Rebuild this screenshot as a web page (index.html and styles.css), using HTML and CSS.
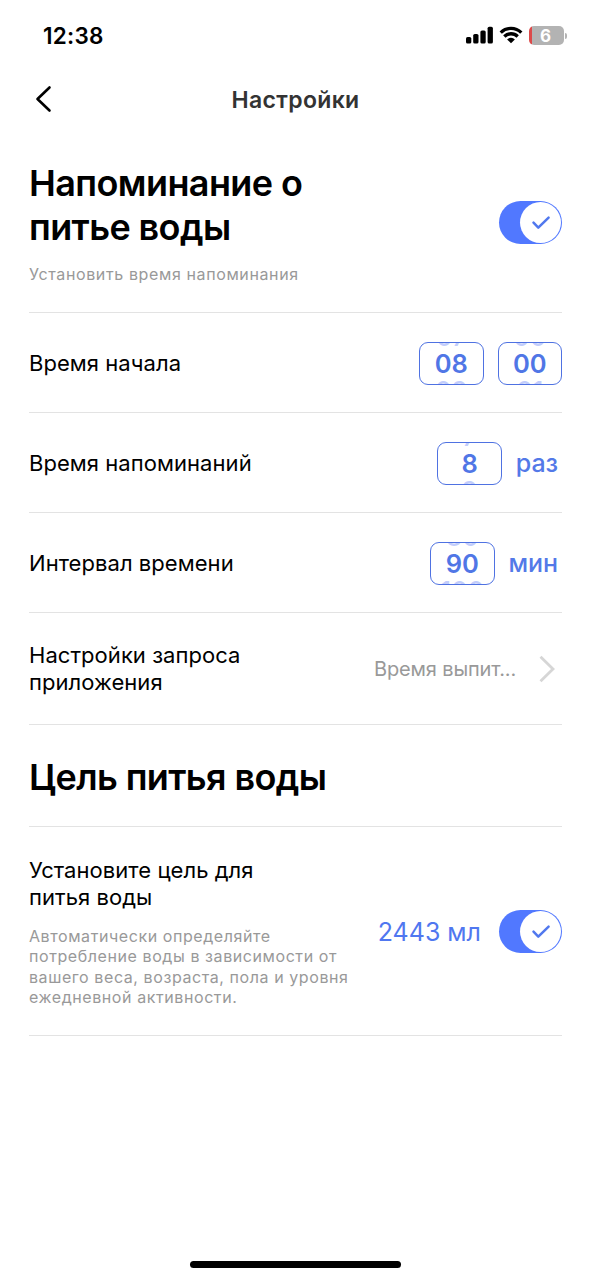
FILE: index.html
```html
<!DOCTYPE html>
<html lang="ru">
<head>
<meta charset="utf-8">
<title>Настройки</title>
<link rel="stylesheet" href="styles.css">
</head>
<body>
<div class="screen">
  <div class="status">
    <span class="clock">12:38</span>
    <div class="indicators">
      <svg class="signal" width="28" height="18" viewBox="0 0 28 18"><rect x="0" y="11" width="5.3" height="6.5" rx="1.6"/><rect x="7.2" y="8" width="5.3" height="9.5" rx="1.6"/><rect x="14.4" y="4.5" width="5.3" height="13" rx="1.6"/><rect x="21.6" y="0.7" width="5.3" height="16.8" rx="1.6"/></svg>
      <svg class="wifi" width="24" height="18" viewBox="0 0 24 18"><path d="M1.7 6.6a14.6 14.6 0 0 1 20.6 0M5.3 10.5a9.5 9.5 0 0 1 13.4 0" fill="none" stroke="#000" stroke-width="3.3"/><path d="M8.1 13.4a5.6 5.6 0 0 1 7.8 0L12 17.3z"/></svg>
      <div class="battery"><span>6</span></div><i class="cap"></i>
    </div>
  </div>
  <header class="nav">
    <svg class="back" width="18" height="28" viewBox="0 0 18 28"><path d="M14.5 2.5L2.5 14l12 11.5" fill="none" stroke="#000" stroke-width="2.6" stroke-linecap="round" stroke-linejoin="round"/></svg>
    <span class="title">Настройки</span>
  </header>
  <main>
    <section class="row intro">
      <div>
        <h1>Напоминание о<br>питье воды</h1>
        <p class="sub">Установить время напоминания</p>
      </div>
      <div class="toggle"><span class="knob"><svg width="20" height="16" viewBox="0 0 20 16"><path d="M2.5 7.7l4.8 5L17.6 2.6"/></svg></span></div>
    </section>
    <section class="row">
      <span class="label">Время начала</span>
      <div class="picks">
        <div class="wheel"><span>07</span><b>08</b><span>09</span></div>
        <div class="wheel"><span>00</span><b>00</b><span>01</span></div>
      </div>
    </section>
    <section class="row">
      <span class="label">Время напоминаний</span>
      <div class="picks">
        <div class="wheel"><span>7</span><b>8</b><span>9</span></div>
        <span class="unit">раз</span>
      </div>
    </section>
    <section class="row">
      <span class="label">Интервал времени</span>
      <div class="picks">
        <div class="wheel"><span>80</span><b>90</b><span>100</span></div>
        <span class="unit">мин</span>
      </div>
    </section>
    <section class="row prompt">
      <span class="label">Настройки запроса<br>приложения</span>
      <div class="link"><span>Время выпит...</span><svg width="16" height="28" viewBox="0 0 16 28"><path d="M1.5 1.7L14 14 1.5 26.3" fill="none" stroke="#d6d6d6" stroke-width="2.8"/></svg></div>
    </section>
    <section class="row goal-head"><h1>Цель питья воды</h1></section>
    <section class="row goal">
      <div>
        <span class="label goal-label">Установите цель для<br>питья воды</span>
        <p class="desc">Автоматически определяйте<br>потребление воды в зависимости от<br>вашего веса, возраста, пола и уровня<br>ежедневной активности.</p>
      </div>
      <div class="amount-wrap">
        <span class="amount">2443 мл</span>
        <div class="toggle"><span class="knob"><svg width="20" height="16" viewBox="0 0 20 16"><path d="M2.5 7.7l4.8 5L17.6 2.6"/></svg></span></div>
      </div>
    </section>
  </main>
  <div class="home"></div>
</div>
</body>
</html>
```
FILE: styles.css
```css
* { box-sizing: border-box; }
body { margin: 0; background: #fff; color: #000; font-family: Inter, "Noto Sans", sans-serif; }
.screen { width: 591px; height: 1280px; display: flex; flex-direction: column; overflow: hidden; }
.status { height: 70px; padding: 1px 24px 0 43px; display: flex; align-items: center; justify-content: space-between; }
.clock { font-size: 22.5px; font-weight: 600; line-height: 28px; letter-spacing: 0.25px; padding-top: 1px; }
.indicators { display: flex; align-items: center; }
.signal { margin: -1px 5px 0 0; }
.wifi { margin: -1px 6px 0 0; }
.battery { width: 35px; height: 19px; border-radius: 5px; background: linear-gradient(90deg, #dc4a4a 2.5px, #b3b3b3 2.5px); color: #fff; font-size: 17px; line-height: 20px; font-weight: 700; text-align: center; }
.battery span { margin-left: -2px; }
.cap { width: 2px; height: 6px; margin-left: 1px; border-radius: 0 2px 2px 0; background: #b3b3b3; }
.nav { height: 60px; display: grid; grid-template-columns: 64px 1fr 64px; align-items: center; }
.back { margin: -2px 0 0 35px; }
.title { text-align: center; font-size: 23px; line-height: 30px; font-weight: 600; color: #333; letter-spacing: 0.35px; }
main { padding: 0 29px; }
.row { height: 100px; border-bottom: 1px solid #e3e3e3; display: flex; align-items: center; justify-content: space-between; padding-top: 1px; }
.intro { height: 183px; align-items: flex-start; padding-top: 31px; }
.intro .toggle { margin-top: 40px; }
h1 { margin: 0; font-size: 36px; line-height: 44px; font-weight: 600; letter-spacing: -0.6px; }
.sub { margin: 15px 0 0; font-size: 16px; line-height: 20px; color: #999; letter-spacing: 0.62px; }
.label { font-size: 22px; line-height: 27px; letter-spacing: 0.05px; }
.picks { display: flex; align-items: center; gap: 14px; }
.wheel { width: 64.5px; height: 43px; border: 1.5px solid #4f72e2; border-radius: 9px; overflow: hidden; display: flex; flex-direction: column; align-items: center; justify-content: center; font-size: 25.5px; line-height: 27px; color: #5076e6; }
.wheel span { color: #c2cdfb; flex: none; font-weight: 500; }
.wheel b { font-weight: 600; flex: none; }
.unit { font-size: 25px; line-height: 30px; font-weight: 500; color: #5379e8; margin-right: 4px; letter-spacing: -0.1px; }
.prompt { height: 112px; padding-top: 1px; }
.link { display: flex; align-items: center; gap: 23px; margin-right: 7px; color: #999; font-size: 20px; line-height: 27px; letter-spacing: -0.15px; }
.link span { padding-top: 1px; }
.goal-head { height: 102px; padding-top: 2px; }
.goal { height: 209px; align-items: flex-start; padding-top: 30px; }
.goal-label { display: block; }
.desc { margin: 15px 0 0; font-size: 16px; line-height: 20.3px; color: #999; letter-spacing: 0.58px; white-space: nowrap; }
.amount-wrap { display: flex; align-items: center; gap: 18px; margin-top: 53px; }
.amount { font-size: 25px; color: #5077f0; line-height: 30px; white-space: nowrap; }
.toggle { flex: none; width: 63px; height: 43px; border-radius: 22px; background: #5178ff; display: flex; justify-content: flex-end; padding: 1px; }
.knob { width: 41px; height: 41px; border-radius: 50%; background: #fff; display: flex; align-items: center; justify-content: center; }
.knob path { fill: none; stroke: #5178ee; stroke-width: 2.5; stroke-linecap: round; stroke-linejoin: round; }
.home { width: 211px; height: 7px; border-radius: 4px; background: #000; margin: auto 0 12px 190px; }
```
